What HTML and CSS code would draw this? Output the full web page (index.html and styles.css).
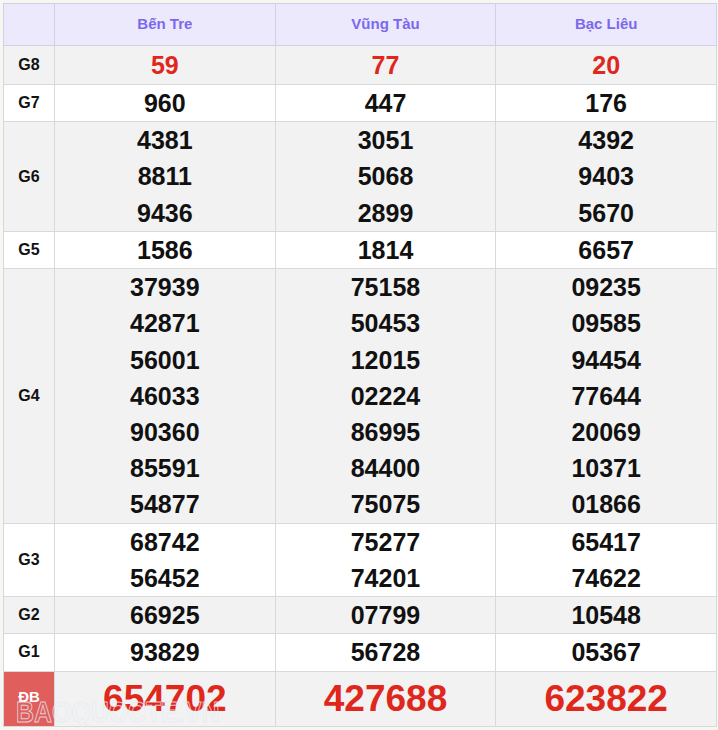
FILE: index.html
```html
<!DOCTYPE html>
<html lang="vi">
<head>
<meta charset="utf-8">
<link rel="stylesheet" href="styles.css">
</head>
<body>
<div class="wrap">
<table class="kq">
  <colgroup><col class="c-label"><col class="c-prov"><col class="c-prov"><col class="c-prov"></colgroup>
  <thead>
    <tr class="head"><th></th><th>Bến Tre</th><th>Vũng Tàu</th><th>Bạc Liêu</th></tr>
  </thead>
  <tbody>
    <tr class="alt g8"><td class="lbl">G8</td><td><div class="n red">59</div></td><td><div class="n red">77</div></td><td><div class="n red">20</div></td></tr>
    <tr><td class="lbl">G7</td><td><div class="n">960</div></td><td><div class="n">447</div></td><td><div class="n">176</div></td></tr>
    <tr class="alt g6"><td class="lbl">G6</td>
      <td><div class="n">4381</div><div class="n">8811</div><div class="n">9436</div></td>
      <td><div class="n">3051</div><div class="n">5068</div><div class="n">2899</div></td>
      <td><div class="n">4392</div><div class="n">9403</div><div class="n">5670</div></td></tr>
    <tr><td class="lbl">G5</td><td><div class="n">1586</div></td><td><div class="n">1814</div></td><td><div class="n">6657</div></td></tr>
    <tr class="alt g4"><td class="lbl">G4</td>
      <td><div class="n">37939</div><div class="n">42871</div><div class="n">56001</div><div class="n">46033</div><div class="n">90360</div><div class="n">85591</div><div class="n">54877</div></td>
      <td><div class="n">75158</div><div class="n">50453</div><div class="n">12015</div><div class="n">02224</div><div class="n">86995</div><div class="n">84400</div><div class="n">75075</div></td>
      <td><div class="n">09235</div><div class="n">09585</div><div class="n">94454</div><div class="n">77644</div><div class="n">20069</div><div class="n">10371</div><div class="n">01866</div></td></tr>
    <tr class="g3"><td class="lbl">G3</td>
      <td><div class="n">68742</div><div class="n">56452</div></td>
      <td><div class="n">75277</div><div class="n">74201</div></td>
      <td><div class="n">65417</div><div class="n">74622</div></td></tr>
    <tr class="alt"><td class="lbl">G2</td><td><div class="n">66925</div></td><td><div class="n">07799</div></td><td><div class="n">10548</div></td></tr>
    <tr class="g1"><td class="lbl">G1</td><td><div class="n">93829</div></td><td><div class="n">56728</div></td><td><div class="n">05367</div></td></tr>
    <tr class="alt db"><td class="lbl db-lbl">ĐB</td><td><div class="n big">654702</div></td><td><div class="n big">427688</div></td><td><div class="n big">623822</div></td></tr>
  </tbody>
</table>
<div class="watermark">BAOQUOCTE.VN</div>
</div>
</body>
</html>
```

FILE: styles.css
```css
html, body {
  margin: 0;
  padding: 0;
  background: #f8f6f2;
}
body {
  font-family: "Liberation Sans", Arial, sans-serif;
}
.wrap {
  position: relative;
  padding: 3px 0 0 3px;
  width: 715px;
}
.kq {
  border-collapse: collapse;
  width: 714px;
  table-layout: fixed;
  background: #fff;
}
.c-label { width: 51px; }
.kq th, .kq td {
  border: 1px solid #d9d9d9;
  padding: 0;
  text-align: center;
  vertical-align: middle;
}
.head th {
  background: #ece9fc;
  color: #7b68ee;
  font-size: 15px;
  font-weight: bold;
  height: 39px;
  padding-bottom: 2px;
  border-color: #d3d0e4;
}
.alt td { background: #f2f2f2; }
.lbl {
  font-size: 16px;
  font-weight: bold;
  color: #111;
}
.n {
  font-size: 25px;
  font-weight: bold;
  color: #111;
  line-height: 36px;
}
.g6 .n { line-height: 36.4px; }
.g4 .n { line-height: 36.2px; }
.g8 .n { line-height: 38px; }
.g1 .n { line-height: 37px; }
.red { color: #e0271b; }
.big {
  font-size: 37px;
  line-height: 54px;
  color: #e0271b;
}
.alt .db-lbl {
  background: #e05e5b;
  color: #fff;
  font-size: 15px;
  padding-bottom: 4px;
}
.watermark {
  position: absolute;
  left: 16px;
  top: 695px;
  font-size: 30px;
  font-weight: bold;
  color: transparent;
  -webkit-text-stroke: 1px rgba(228, 236, 246, 0.8);
  transform: scaleX(0.83);
  transform-origin: left center;
  pointer-events: none;
  white-space: nowrap;
}
```
